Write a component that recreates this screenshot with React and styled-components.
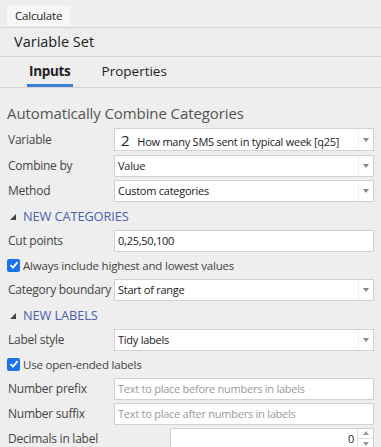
import React from 'react';
import styled, { createGlobalStyle } from 'styled-components';

const Global = createGlobalStyle`
  html, body {
    margin: 0;
    padding: 0;
    background: #eeeeee;
    overflow: hidden;
  }
  body {
    font-family: "Open Sans", "Noto Sans", sans-serif;
    color: #333;
  }
`;

const Page = styled.div`
  width: 381px;
  height: 447px;
  overflow: hidden;
  background: #eeeeee;
`;

const Toolbar = styled.div`
  height: 28px;
  padding: 3px 0 0 7px;
  box-sizing: border-box;
  border-bottom: 1px solid #d4d4d4;
`;

const ToolButton = styled.button`
  height: 20px;
  padding: 0 8px;
  border: none;
  background: #f7f7f7;
  font-family: inherit;
  font-size: 11.5px;
  letter-spacing: -0.2px;
  color: #222;
`;

const Title = styled.div`
  height: 28px;
  line-height: 28px;
  padding-left: 14px;
  font-size: 14.5px;
  color: #222;
  border-bottom: 1px solid #d4d4d4;
`;

const Tabs = styled.div`
  display: flex;
  height: 30px;
  padding-left: 27px;
  gap: 27px;
  border-bottom: 1px solid #d4d4d4;
`;

const Tab = styled.div`
  padding: 0 2px;
  font-size: 13.5px;
  letter-spacing: ${({ active }) => (active ? '-0.3px' : '0')};
  font-weight: ${({ active }) => (active ? 700 : 400)};
  color: #222;
  border-bottom: 3px solid ${({ active }) => (active ? '#3d7fd6' : 'transparent')};
  height: 27px;
  line-height: 29px;
`;

const Body = styled.div`
  padding: 14px 7px 0 7px;
`;

const Heading = styled.div`
  font-size: 15px;
  letter-spacing: -0.1px;
  color: #555;
  line-height: 22px;
  margin-bottom: 2px;
`;

const Row = styled.div`
  display: flex;
  align-items: center;
  height: ${({ tall }) => (tall ? 27 : 25)}px;
  margin-left: 1px;
`;

const Label = styled.div`
  width: 106px;
  flex: none;
  white-space: nowrap;
  font-size: 12px;
  letter-spacing: -0.25px;
  color: #444;
`;

const Field = styled.div`
  flex: 1;
  height: ${({ tall }) => (tall ? 23 : 22)}px;
  box-sizing: border-box;
  display: flex;
  align-items: center;
  background: #fff;
  border: 1px solid #d2d2d2;
  margin-left: ${({ offset }) => offset || 0}px;
  font-size: 11px;
  letter-spacing: -0.25px;
  color: ${({ placeholder }) => (placeholder ? '#9a9a9a' : '#222')};
`;

const FieldText = styled.div`
  flex: 1;
  padding: 0 3px;
  white-space: nowrap;
  overflow: hidden;
  text-align: ${({ right }) => (right ? 'right' : 'left')};
`;

const Num = styled.span`
  font-size: 15px;
  margin: 0 8px 0 3px;
`;

const Arrow = styled.div`
  width: 14px;
  height: 20px;
  border-left: 1px solid #f0f0f0;
  display: flex;
  align-items: center;
  justify-content: center;
  &::after {
    content: '';
    border-left: 3.5px solid transparent;
    border-right: 3.5px solid transparent;
    border-top: 4px solid #888;
  }
`;

const Spin = styled.div`
  width: 15px;
  height: 100%;
  display: flex;
  flex-direction: column;
  border-left: 1px solid #e0e0e0;
`;

const SpinPart = styled.div`
  flex: 1;
  display: flex;
  align-items: center;
  justify-content: center;
  & + & {
    border-top: 1px solid #e0e0e0;
  }
  &::after {
    content: '';
    border-left: 3.5px solid transparent;
    border-right: 3.5px solid transparent;
    ${({ up }) => (up ? 'border-bottom: 4px solid #999;' : 'border-top: 4px solid #999;')}
  }
`;

const Section = styled.div`
  display: flex;
  align-items: center;
  height: 24px;
  margin-top: 1px;
  padding-left: 3px;
  font-size: 12.8px;
  letter-spacing: -0.1px;
  color: #4a62ad;
`;

const Tri = styled.span`
  width: 0;
  height: 0;
  border-left: 6px solid transparent;
  border-bottom: 6px solid #444;
  margin-right: 7px;
  margin-top: 2px;
`;

const CheckRow = styled.label`
  display: flex;
  align-items: center;
  height: 24px;
  font-size: 11.5px;
  letter-spacing: -0.2px;
  color: #444;
`;

const Box = styled.span`
  width: 13px;
  height: 13px;
  border-radius: 2px;
  background: #1a73e8;
  margin-right: 3px;
  display: flex;
  align-items: center;
  justify-content: center;
`;

const Select = ({ children, tall }) => (
  <Field tall={tall}>
    <FieldText>{children}</FieldText>
    <Arrow />
  </Field>
);

const Check = ({ children }) => (
  <CheckRow>
    <Box>
      <svg width="10" height="10" viewBox="0 0 10 10">
        <path d="M1.5 5.2 L4 7.6 L8.6 2.2" fill="none" stroke="#fff" strokeWidth="1.8" />
      </svg>
    </Box>
    {children}
  </CheckRow>
);

export default function App() {
  return (
    <Page>
      <Global />
      <Toolbar>
        <ToolButton>Calculate</ToolButton>
      </Toolbar>
      <Title>Variable Set</Title>
      <Tabs>
        <Tab active>Inputs</Tab>
        <Tab>Properties</Tab>
      </Tabs>
      <Body>
        <Heading>Automatically Combine Categories</Heading>
        <Row tall>
          <Label>Variable</Label>
          <Select tall>
            <Num>2</Num>How many SMS sent in typical week [q25]
          </Select>
        </Row>
        <Row>
          <Label>Combine by</Label>
          <Select>Value</Select>
        </Row>
        <Row>
          <Label>Method</Label>
          <Select>Custom categories</Select>
        </Row>
        <Section>
          <Tri />
          NEW CATEGORIES
        </Section>
        <Row>
          <Label>Cut points</Label>
          <Field>
            <FieldText>0,25,50,100</FieldText>
          </Field>
        </Row>
        <Check>Always include highest and lowest values</Check>
        <Row>
          <Label>Category boundary</Label>
          <Select>Start of range</Select>
        </Row>
        <Section>
          <Tri />
          NEW LABELS
        </Section>
        <Row>
          <Label>Label style</Label>
          <Select>Tidy labels</Select>
        </Row>
        <Check>Use open-ended labels</Check>
        <Row>
          <Label>Number prefix</Label>
          <Field placeholder>
            <FieldText>Text to place before numbers in labels</FieldText>
          </Field>
        </Row>
        <Row>
          <Label>Number suffix</Label>
          <Field placeholder>
            <FieldText>Text to place after numbers in labels</FieldText>
          </Field>
        </Row>
        <Row>
          <Label>Decimals in label</Label>
          <Field offset={56}>
            <FieldText right>0</FieldText>
            <Spin>
              <SpinPart up />
              <SpinPart />
            </Spin>
          </Field>
        </Row>
      </Body>
    </Page>
  );
}
